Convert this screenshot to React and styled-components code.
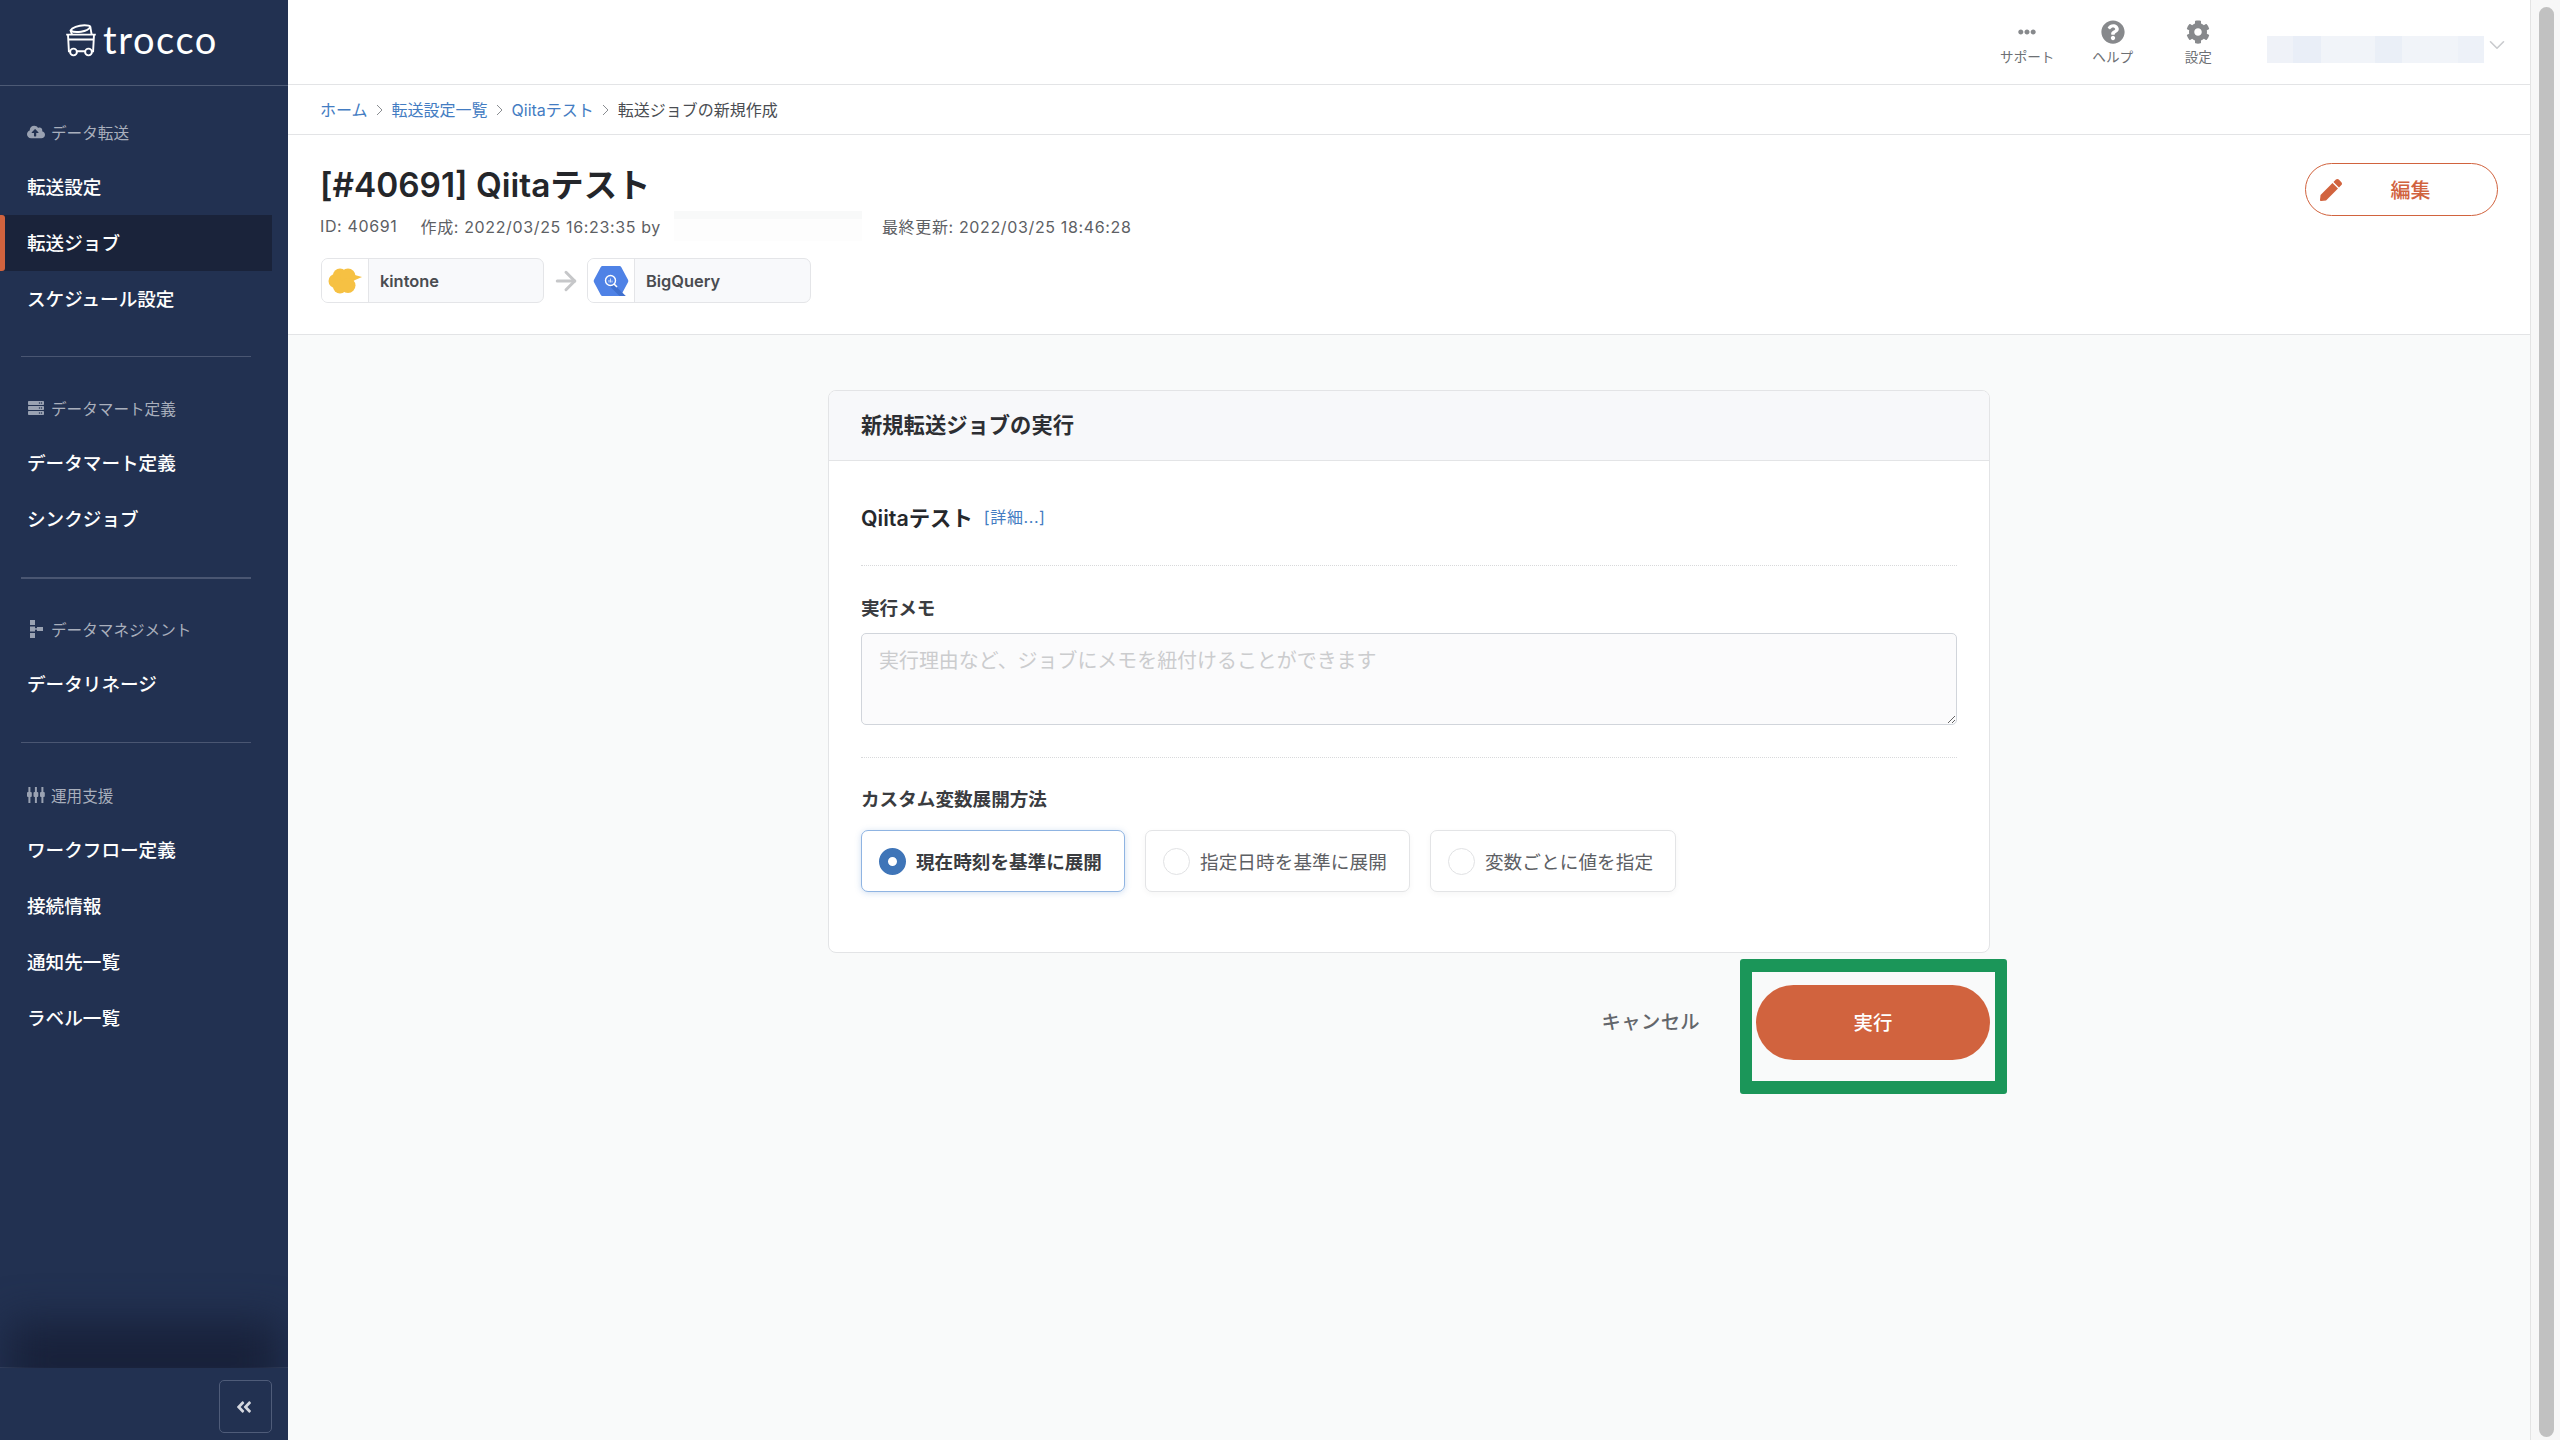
import React from 'react';
import styled, { createGlobalStyle } from 'styled-components';
import { FaCloudUploadAlt, FaServer, FaQuestionCircle, FaCog, FaPen, FaAngleDoubleLeft, FaEllipsisH } from 'react-icons/fa';
import { ChevronDown, ArrowRight } from 'lucide-react';

const FONT = `Inter, "Noto Sans CJK JP", sans-serif`;

const GlobalStyle = createGlobalStyle`
  html, body {
    margin: 0;
    height: 100%;
    overflow: hidden;
    background: #f9fafa;
    font-family: ${FONT};
  }
  * {
    box-sizing: border-box;
  }
`;

const Page = styled.div`
  display: flex;
  width: 2560px;
  height: 1440px;
`;

const Sidebar = styled.aside`
  display: flex;
  flex-direction: column;
  flex: 0 0 288px;
  background: #223151;
  overflow: hidden;
`;

const Logo = styled.div`
  display: flex;
  align-items: center;
  justify-content: center;
  gap: 6px;
  flex: 0 0 86px;
  padding: 0 5px 5px 0;
  border-bottom: 1px solid #4d5a75;
`;

const LogoText = styled.span`
  font-family: Lato, sans-serif;
  font-size: 38px;
  line-height: 1;
  letter-spacing: 1.6px;
  color: #fff;
  margin-top: -2px;
`;

const Nav = styled.nav`
  flex: 1;
`;

const Section = styled.div`
  padding: ${p => p.$top}px 0 ${p => p.$bottom}px;
`;

const Divider = styled.div`
  height: ${p => (p.$thick ? 2 : 1)}px;
  margin: 0 37px 0 21px;
  background: #4a5672;
`;

const SectionLabel = styled.div`
  display: flex;
  align-items: center;
  gap: 6px;
  height: 36px;
  margin-bottom: 8px;
  padding: 0 0 2px 27px;
  font-size: 15.6px;
  color: #a9afbc;
`;

const SectionIcon = styled.span`
  display: inline-flex;
  align-items: center;
  justify-content: center;
  width: 18px;
  height: 18px;
  font-size: 18px;
  color: #9aa2b2;
`;

const NavItem = styled.a`
  position: relative;
  display: flex;
  align-items: center;
  width: 272px;
  height: 56px;
  padding: 0 0 3px 27px;
  font-size: 18.6px;
  font-weight: 500;
  color: #fff;
  background: ${p => (p.$active ? '#1a233a' : 'transparent')};

  &::before {
    content: ${p => (p.$active ? "''" : 'none')};
    position: absolute;
    left: 0;
    top: 0;
    bottom: 0;
    width: 5px;
    border-radius: 0 3px 3px 0;
    background: #d1633e;
  }
`;

const SidebarFooter = styled.div`
  position: relative;
  display: flex;
  justify-content: flex-end;
  flex: 0 0 73px;
  padding: 12px 16px 0 0;
  background: #223151;
  border-top: 1px solid #3d4a68;
`;

const FooterShade = styled.div`
  position: absolute;
  left: 0;
  right: 0;
  bottom: 100%;
  height: 110px;
  overflow: hidden;

  &::before {
    content: '';
    position: absolute;
    left: 8px;
    right: 8px;
    bottom: -30px;
    height: 76px;
    background: #18213a;
    filter: blur(20px);
  }
`;

const CollapseButton = styled.button`
  display: flex;
  align-items: center;
  justify-content: center;
  width: 53px;
  height: 53px;
  padding: 0 4px 0 0;
  background: transparent;
  border: 1px solid #4f5c79;
  border-radius: 5px;
  font-size: 18px;
  color: #d5d8df;
`;

const Main = styled.main`
  display: flex;
  flex-direction: column;
  flex: 1;
  min-width: 0;
`;

const TopBar = styled.header`
  display: flex;
  align-items: flex-start;
  justify-content: flex-end;
  flex: 0 0 85px;
  padding-right: 20px;
  background: #fff;
  border-bottom: 1px solid #e3e4e6;
`;

const TopItem = styled.div`
  display: flex;
  flex-direction: column;
  align-items: center;
  width: 85.5px;
  padding-top: 20px;
  font-size: 13.6px;
  color: #6d7074;
`;

const TopIcon = styled.span`
  display: flex;
  align-items: center;
  justify-content: center;
  height: 24px;
  margin-bottom: 2px;
  font-size: 24px;
  color: #87898c;
`;

const Profile = styled.div`
  width: 217px;
  height: 27px;
  margin: 36px 0 0 26px;
  background: linear-gradient(90deg, #eff2f8 0 12%, #e9eef7 12% 25%, #f1f4f9 25% 50%, #eaeff7 50% 62%, #f1f4f9 62% 88%, #edf1f8 88%);
`;

const ProfileCaret = styled.span`
  display: flex;
  margin-top: 32px;
  color: #c9cbce;
`;

const Breadcrumbs = styled.div`
  display: flex;
  align-items: center;
  flex: 0 0 50px;
  padding: 0 0 2px 32px;
  background: #fff;
  border-bottom: 1px solid #e3e4e6;
  font-size: 16px;
  color: #4a4d52;
`;

const Crumb = styled.a`
  color: #437cc2;
`;

const CrumbSep = styled.svg`
  width: 8px;
  height: 12px;
  margin: 3px 7.5px 0 8.5px;
  fill: none;
  stroke: #8a8d91;
  stroke-width: 1;
`;

const JobHeader = styled.section`
  display: flex;
  justify-content: space-between;
  flex: 0 0 200px;
  padding: 28px 32px 0;
  background: #fff;
  border-bottom: 1px solid #e3e4e6;
`;

const JobTitle = styled.h1`
  margin: 0;
  font-size: 33.4px;
  line-height: 44px;
  font-weight: 600;
  color: #24262a;
`;

const Meta = styled.div`
  display: flex;
  align-items: center;
  margin-top: 5px;
  height: 28px;
  font-size: 16px;
  letter-spacing: 0.64px;
  color: #5d6064;
`;

const MetaGap = styled.span`
  margin-left: ${p => p.$gap}px;
`;

const Redacted = styled.span`
  width: 188px;
  height: 30px;
  margin: 0 20px 0 13px;
  background: linear-gradient(180deg, #f8f9f9 0 25%, #fdfdfd 25%);
`;

const ConnectorRow = styled.div`
  display: flex;
  align-items: center;
  margin: 18px 0 0 1px;
`;

const Connector = styled.div`
  display: flex;
  width: ${p => p.$width}px;
  height: 45px;
  background: #f8f9fb;
  border: 1px solid #e4e5e8;
  border-radius: 7px;
  overflow: hidden;
`;

const ConnectorIcon = styled.span`
  display: flex;
  align-items: center;
  justify-content: center;
  flex: 0 0 47px;
  background: #fff;
  border-right: 1px solid #e4e5e8;
`;

const ConnectorName = styled.span`
  display: flex;
  align-items: center;
  padding-left: 11px;
  font-size: 16.4px;
  font-weight: 600;
  color: #4a4c50;
`;

const ConnectorArrow = styled.span`
  display: flex;
  justify-content: center;
  width: 43px;
  color: #c6c7c9;
`;

const EditButton = styled.button`
  position: relative;
  flex: 0 0 193px;
  height: 53px;
  margin: 0;
  padding: 0 0 0 18px;
  background: #fff;
  border: 1.5px solid #d1633e;
  border-radius: 27px;
  font-family: ${FONT};
  font-size: 20px;
  font-weight: 500;
  color: #d1633e;

  svg {
    position: absolute;
    left: 14px;
    top: 15px;
    font-size: 22px;
  }
`;

const Content = styled.div`
  display: flex;
  flex-direction: column;
  flex: 1;
  align-items: center;
  padding: 55px 0 0 0;
  background: #f9fafa;
`;

const Column = styled.div`
  width: 1162px;
  margin-left: 0;
`;

const Card = styled.div`
  height: 563px;
  background: #fff;
  border: 1px solid #e3e4e6;
  border-radius: 8px;
  overflow: hidden;
`;

const CardHeader = styled.div`
  display: flex;
  align-items: center;
  height: 70px;
  padding: 0 0 4px 32px;
  background: #f7f8fa;
  border-bottom: 1px solid #e3e4e6;
  font-size: 21.3px;
  font-weight: 600;
  color: #2d2f33;
`;

const CardBody = styled.div`
  padding: 0 32px;
`;

const NameRow = styled.div`
  display: flex;
  align-items: center;
  gap: 11px;
  height: 105px;
  padding-top: 6px;
  border-bottom: 1px dotted #d8d9db;
`;

const JobName = styled.span`
  font-size: 21.4px;
  font-weight: 600;
  color: #26282c;
`;

const DetailLink = styled.a`
  font-size: 16px;
  letter-spacing: 0.6px;
  color: #437cc2;
`;

const Field = styled.div`
  height: ${p => p.$height}px;
  padding-top: ${p => p.$top}px;
  border-bottom: ${p => (p.$line ? '1px dotted #d8d9db' : '0')};
`;

const FieldLabel = styled.div`
  height: 26px;
  line-height: 26px;
  font-size: 18.6px;
  font-weight: 600;
  color: #3a3c40;
`;

const MemoInput = styled.textarea`
  display: block;
  width: 100%;
  height: 92px;
  margin-top: 12px;
  padding: 14px 17px;
  background: #fbfbfc;
  border: 1px solid #d1d5db;
  border-radius: 5px;
  font-family: ${FONT};
  font-size: 19.95px;
  line-height: 26px;
  outline: none;

  &::placeholder {
    color: #cbccce;
  }
`;

const RadioRow = styled.div`
  display: flex;
  gap: 20px;
  margin-top: 18px;
`;

const RadioCard = styled.label`
  display: flex;
  align-items: center;
  gap: 10px;
  height: 62px;
  padding: 0 22px 0 17px;
  background: #fff;
  border: 1px solid ${p => (p.$selected ? '#8fb4e2' : '#e3e4e6')};
  border-radius: 7px;
  box-shadow: ${p => (p.$selected ? '0 1px 6px rgba(67,124,194,.25)' : '0 2px 6px rgba(0,0,0,.04)')};
  font-size: 18.6px;
  font-weight: ${p => (p.$selected ? 600 : 400)};
  letter-spacing: ${p => (p.$selected ? '0' : '0.1px')};
  color: ${p => (p.$selected ? '#3a3c40' : '#5d6064')};
`;

const RadioText = styled.span`
  padding-bottom: 2px;
`;

const RadioDot = styled.span`
  flex: 0 0 27px;
  height: 27px;
  border-radius: 50%;
  background: #fff;
  border: ${p => (p.$selected ? '9px solid #3f75b8' : '1px solid #e1e2e4')};
`;

const Actions = styled.div`
  display: flex;
  align-items: center;
  justify-content: flex-end;
  gap: 56px;
  margin-top: 32px;
`;

const CancelLink = styled.a`
  padding-bottom: 3px;
  font-size: 19.3px;
  font-weight: 500;
  letter-spacing: 0.4px;
  color: #63666b;
`;

const RunWrap = styled.div`
  position: relative;
`;

const RunButton = styled.button`
  display: block;
  width: 234px;
  height: 75px;
  padding: 0 0 3px;
  background: #d1633e;
  border: 0;
  border-radius: 38px;
  font-family: ${FONT};
  font-size: 19.4px;
  font-weight: 500;
  color: #fff;
`;

const Highlight = styled.div`
  position: absolute;
  left: -16px;
  right: -17px;
  top: -26px;
  bottom: -34px;
  border: 13px solid #1b9659;
  border-left-width: 12px;
  border-right-width: 12px;
  border-radius: 3px;
  pointer-events: none;
`;

const ScrollTrack = styled.div`
  flex: 0 0 30px;
  padding: 7px 6px 3px 8px;
  background: #f7f7f7;
  border-left: 1px solid #e4e4e4;
`;

const ScrollThumb = styled.div`
  height: 100%;
  background: #c1c1c1;
  border-radius: 8px;
`;

const CartLogo = () => (
  <svg width="32" height="33" viewBox="0 0 32 33" fill="none" stroke="#fff" strokeWidth="1.9">
    <path d="M7 10.5 5.5 6.4C7 3.6 13 1.4 19.5 1.3c3.5 0 5.3.5 5.8 1.4L26.6 10.5" />
    <path d="M5.6 6.4c2 1.5 6 2 10.4 1.3 4.5-.6 8-2.3 9.4-5" />
    <path d="M1.2 10.6h29.6M3 10.6l.9 16.6h24.2l.9-16.6M2.6 15.5h26.8" />
    <circle cx="8.5" cy="28" r="3.4" fill="#223151" />
    <circle cx="23.5" cy="28" r="3.4" fill="#223151" />
  </svg>
);

const LineageIcon = () => (
  <svg width="18" height="18" viewBox="0 0 18 18" fill="#9aa2b2">
    <rect x="3" y="0" width="5" height="5" />
    <rect x="3" y="6.5" width="5" height="5" />
    <rect x="3" y="13" width="5" height="5" />
    <rect x="10" y="7" width="6" height="4" />
    <rect x="7" y="8.2" width="4" height="1.5" />
  </svg>
);

const KnobsIcon = () => (
  <svg width="18" height="16" viewBox="0 0 18 16" fill="#9aa2b2">
    {[0, 6.5, 13].map(x => (
      <g key={x}>
        <rect x={x + 1.4} y="0" width="2" height="16" />
        <rect x={x} y="5" width="4.8" height="5" rx="1" />
      </g>
    ))}
  </svg>
);

const KintoneIcon = () => (
  <svg width="34" height="26" viewBox="0 0 34 26" fill="#f6c143">
    <circle cx="7.5" cy="13" r="7" />
    <circle cx="12" cy="7.5" r="7" />
    <circle cx="20" cy="8" r="7.5" />
    <circle cx="12" cy="18.5" r="7" />
    <circle cx="20" cy="17.5" r="7.5" />
    <path d="M25 6.5 34 9 26 12.5z" />
  </svg>
);

const BigQueryIcon = () => (
  <svg width="36" height="32" viewBox="0 0 36 32">
    <path d="M9.5 1h17a2 2 0 0 1 1.7 1L35 14.8a2.4 2.4 0 0 1 0 2.4L28.2 30a2 2 0 0 1-1.7 1h-17a2 2 0 0 1-1.7-1L1 17.2a2.4 2.4 0 0 1 0-2.4L7.8 2a2 2 0 0 1 1.7-1z" fill="#4f82e6" />
    <path d="M21 19.5l11.8 11.5H26.5L16.5 21z" fill="#3f70cf" />
    <circle cx="17.5" cy="15.5" r="5" fill="#4f82e6" stroke="#fff" strokeWidth="1.4" />
    <path d="M21 19l3 3" stroke="#fff" strokeWidth="1.6" />
    <path d="M16 15v2.5M17.5 13.5v4M19 15.5v2" stroke="#cfdcf7" strokeWidth="1" />
  </svg>
);

const Sep = () => (
  <CrumbSep viewBox="0 0 8 12">
    <path d="M1 1l5 5-5 5" />
  </CrumbSep>
);

const Group = ({ top, bottom, icon, label, items, active }) => (
  <Section $top={top} $bottom={bottom}>
    <SectionLabel>
      <SectionIcon>{icon}</SectionIcon>
      {label}
    </SectionLabel>
    {items.map(item => (
      <NavItem key={item} $active={item === active}>{item}</NavItem>
    ))}
  </Section>
);

const radios = ['現在時刻を基準に展開', '指定日時を基準に展開', '変数ごとに値を指定'];

export default function App() {
  return (
    <Page>
      <GlobalStyle />
      <Sidebar>
        <Logo>
          <CartLogo />
          <LogoText>trocco</LogoText>
        </Logo>
        <Nav>
          <Group
            top={29}
            bottom={29}
            icon={<FaCloudUploadAlt />}
            label="データ転送"
            items={['転送設定', '転送ジョブ', 'スケジュール設定']}
            active="転送ジョブ"
          />
          <Divider />
          <Group top={34} bottom={30} icon={<FaServer size={16} />} label="データマート定義" items={['データマート定義', 'シンクジョブ']} />
          <Divider $thick />
          <Group top={33} bottom={30} icon={<LineageIcon />} label="データマネジメント" items={['データリネージ']} />
          <Divider />
          <Group
            top={35}
            bottom={0}
            icon={<KnobsIcon />}
            label="運用支援"
            items={['ワークフロー定義', '接続情報', '通知先一覧', 'ラベル一覧']}
          />
        </Nav>
        <SidebarFooter>
          <FooterShade />
          <CollapseButton><FaAngleDoubleLeft /></CollapseButton>
        </SidebarFooter>
      </Sidebar>

      <Main>
        <TopBar>
          <TopItem><TopIcon><FaEllipsisH size={18} /></TopIcon>サポート</TopItem>
          <TopItem><TopIcon><FaQuestionCircle /></TopIcon>ヘルプ</TopItem>
          <TopItem><TopIcon><FaCog /></TopIcon>設定</TopItem>
          <Profile />
          <ProfileCaret><ChevronDown size={26} strokeWidth={1.5} /></ProfileCaret>
        </TopBar>

        <Breadcrumbs>
          <Crumb>ホーム</Crumb><Sep />
          <Crumb>転送設定一覧</Crumb><Sep />
          <Crumb>Qiitaテスト</Crumb><Sep />
          転送ジョブの新規作成
        </Breadcrumbs>

        <JobHeader>
          <div>
            <JobTitle>[#40691] Qiitaテスト</JobTitle>
            <Meta>
              ID: 40691
              <MetaGap $gap={23}>作成: 2022/03/25 16:23:35 by</MetaGap>
              <Redacted />
              最終更新: 2022/03/25 18:46:28
            </Meta>
            <ConnectorRow>
              <Connector $width={223}>
                <ConnectorIcon><KintoneIcon /></ConnectorIcon>
                <ConnectorName>kintone</ConnectorName>
              </Connector>
              <ConnectorArrow><ArrowRight size={30} strokeWidth={2.4} /></ConnectorArrow>
              <Connector $width={224}>
                <ConnectorIcon><BigQueryIcon /></ConnectorIcon>
                <ConnectorName>BigQuery</ConnectorName>
              </Connector>
            </ConnectorRow>
          </div>
          <EditButton type="button"><FaPen />編集</EditButton>
        </JobHeader>

        <Content>
          <Column>
            <Card>
              <CardHeader>新規転送ジョブの実行</CardHeader>
              <CardBody>
                <NameRow>
                  <JobName>Qiitaテスト</JobName>
                  <DetailLink>[詳細...]</DetailLink>
                </NameRow>
                <Field $height={192} $top={29} $line>
                  <FieldLabel>実行メモ</FieldLabel>
                  <MemoInput placeholder="実行理由など、ジョブにメモを紐付けることができます" />
                </Field>
                <Field $height={190} $top={28}>
                  <FieldLabel>カスタム変数展開方法</FieldLabel>
                  <RadioRow>
                    {radios.map((label, i) => (
                      <RadioCard key={label} $selected={i === 0}>
                        <RadioDot $selected={i === 0} />
                        <RadioText>{label}</RadioText>
                      </RadioCard>
                    ))}
                  </RadioRow>
                </Field>
              </CardBody>
            </Card>
            <Actions>
              <CancelLink>キャンセル</CancelLink>
              <RunWrap>
                <RunButton type="button">実行</RunButton>
                <Highlight />
              </RunWrap>
            </Actions>
          </Column>
        </Content>
      </Main>

      <ScrollTrack>
        <ScrollThumb />
      </ScrollTrack>
    </Page>
  );
}
